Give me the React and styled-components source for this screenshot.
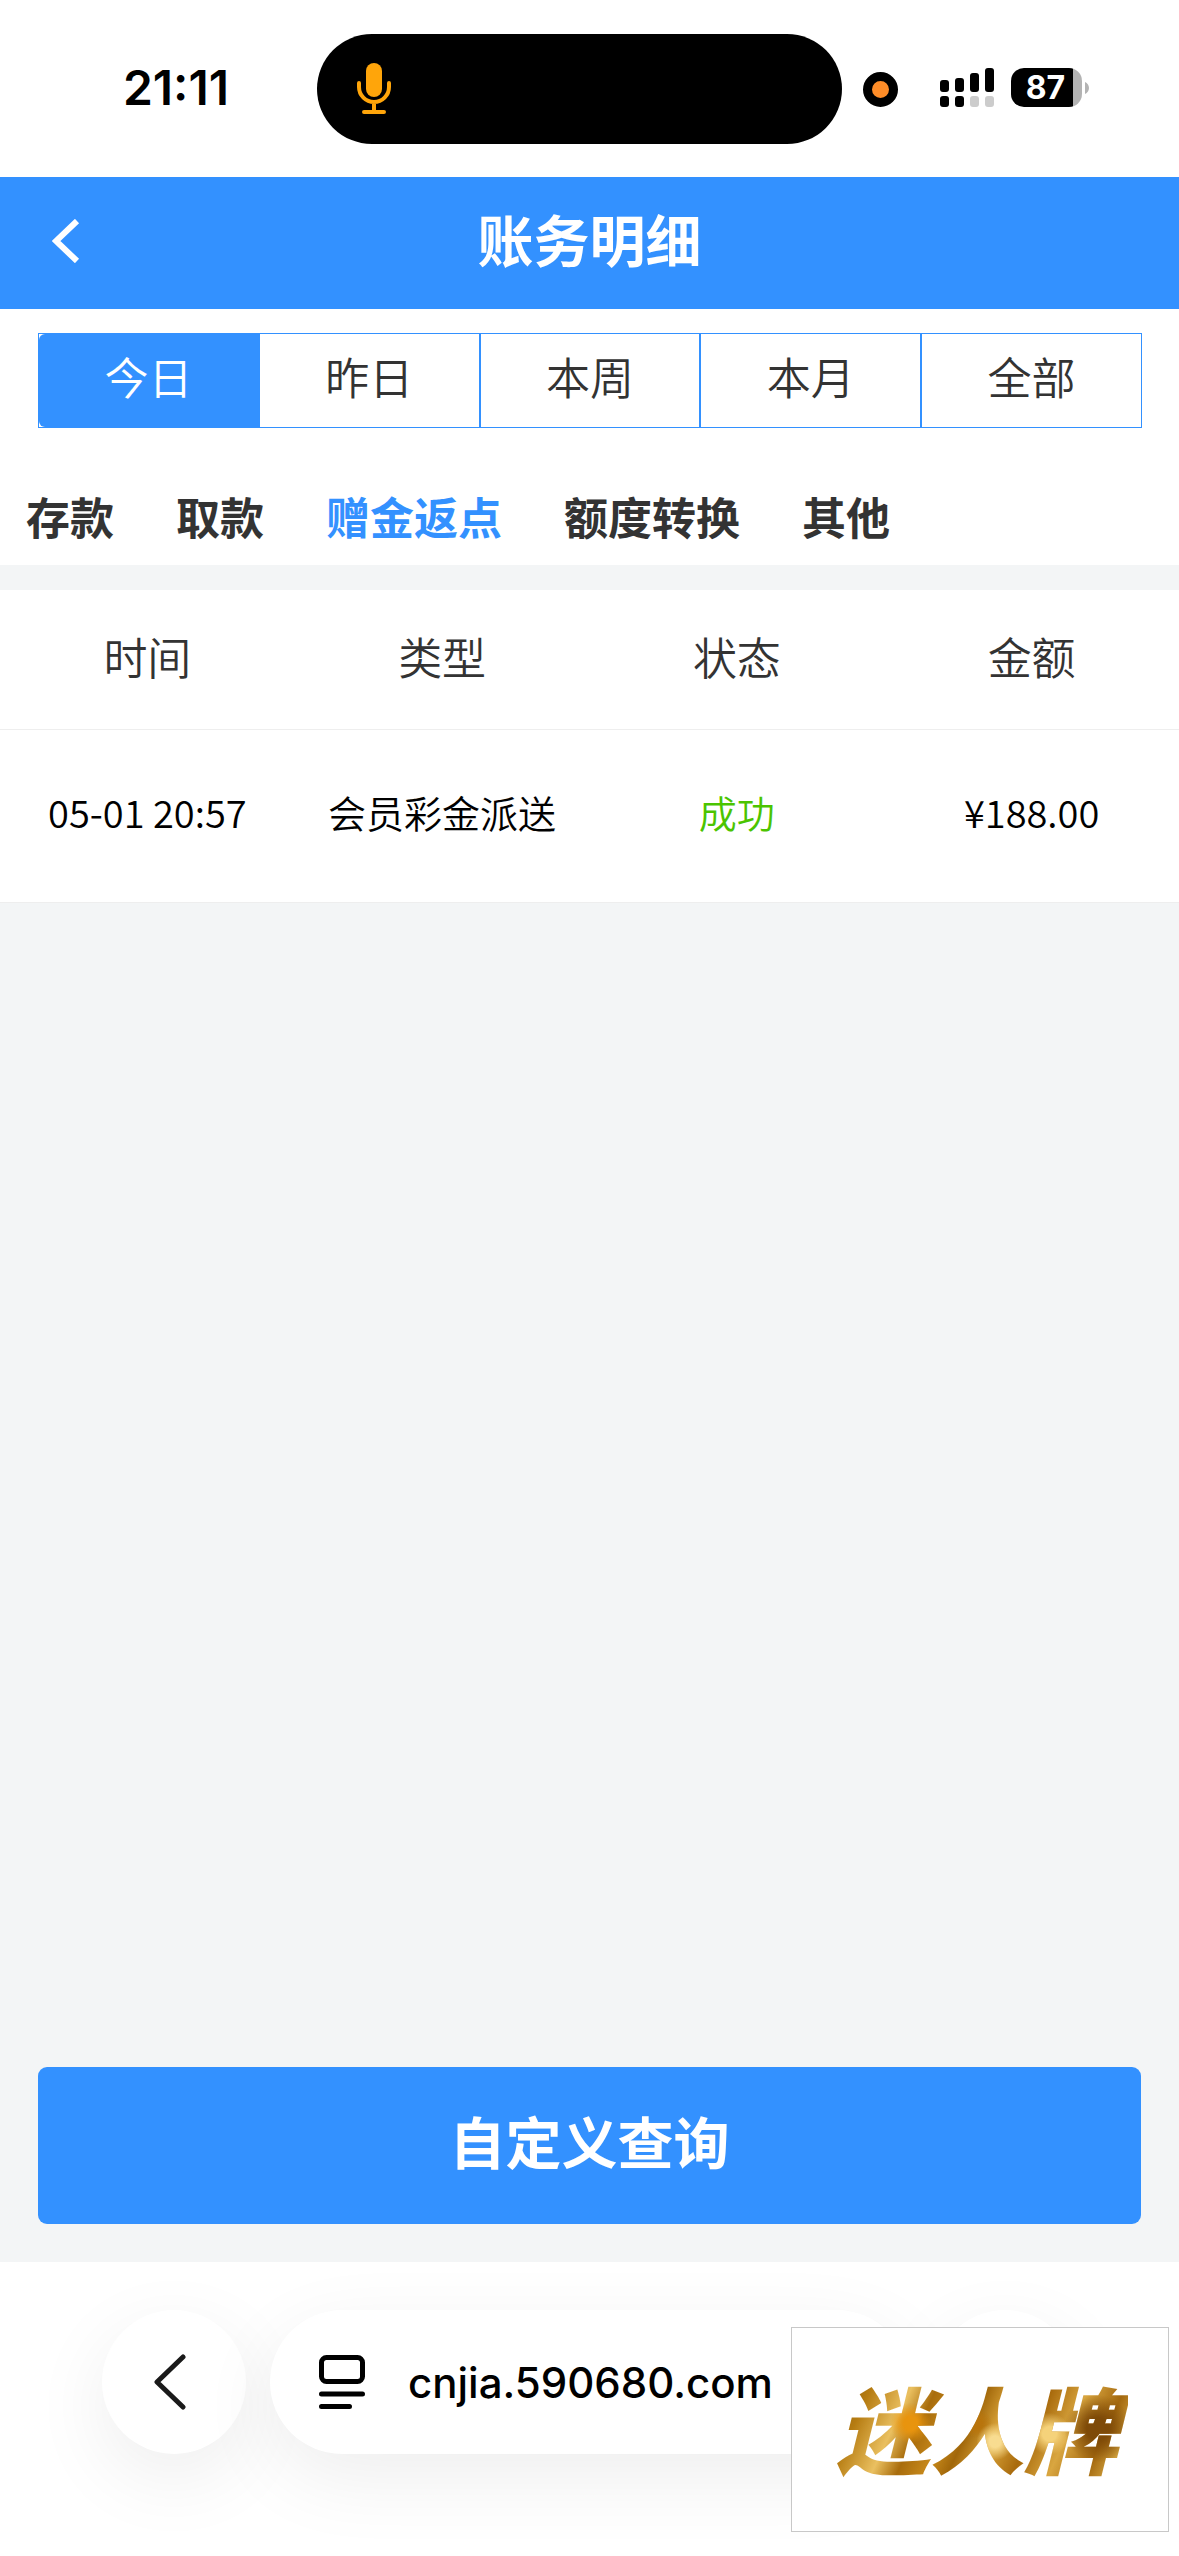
import React, { useState } from "react";
import styled, { createGlobalStyle } from "styled-components";

const BLUE = "#3391ff";
const CJK = `"Noto Sans CJK SC", "Noto Sans", sans-serif`;
const LATIN = `Inter, "Liberation Sans", sans-serif`;

const GlobalStyle = createGlobalStyle`
  *, *::before, *::after { box-sizing: border-box; }
  body { margin: 0; background: #fff; font-family: ${CJK}; color: #333; }
  button { margin: 0; padding: 0; border: 0; background: none; font: inherit; color: inherit; cursor: pointer; }
  svg { display: block; flex: none; }
`;

const Page = styled.div`
  display: flex;
  flex-direction: column;
  min-height: 100vh;
  background: #fff;
`;

const StatusBar = styled.div`
  display: grid;
  grid-template-columns: 317fr 525fr 337fr;
  align-items: center;
  padding: 34px 0 33px;
  font-family: ${LATIN};
  color: #000;
`;

const Clock = styled.time`
  justify-self: end;
  padding: 0 88px 2px 0;
  font-size: 48px;
  line-height: 56px;
  font-weight: 600;
`;

const Island = styled.div`
  display: flex;
  align-items: center;
  height: 110px;
  padding-left: 40px;
  border-radius: 55px;
  background: #000;
`;

const Indicators = styled.div`
  display: flex;
  align-items: center;
  padding-left: 21px;
`;

const RecordingDot = styled.span`
  width: 35px;
  height: 35px;
  margin-right: 42px;
  border: 9px solid #000;
  border-radius: 50%;
  background: #ff8d28;
`;

const Battery = styled.div`
  display: flex;
  align-items: center;
  gap: 3px;
  margin-left: 17px;
`;

const BatteryBody = styled.div`
  width: 71px;
  height: 39px;
  padding-right: 2px;
  border-radius: 13px;
  background: linear-gradient(to right, #000 62px, #b3b3b3 62px);
  color: #fff;
  font-size: 32px;
  line-height: 39px;
  font-weight: 700;
  text-align: center;
`;

const SignalGroup = styled.div`
  display: flex;
  align-items: center;
  padding-bottom: 3px;
`;

const Header = styled.header`
  display: grid;
  grid-template-columns: 1fr auto 1fr;
  align-items: center;
  height: 132px;
  padding: 0 52px 4px;
  background: ${BLUE};
  color: #fff;
`;

const Title = styled.h1`
  margin: 0;
  padding-bottom: 6px;
  font-size: 56px;
  line-height: 80px;
  font-weight: 700;
`;

const BackButton = styled.button`
  justify-self: start;
`;

const Segments = styled.div`
  display: flex;
  margin: 24px 37px 0 38px;
  border: 1px solid ${BLUE};
`;

const Segment = styled.button`
  flex: 1;
  height: 93px;
  padding-bottom: 10px;
  border-radius: ${(p) => (p.$active ? "6px 0 0 6px" : "0")};
  background: ${(p) => (p.$active ? BLUE : "#fff")};
  color: ${(p) => (p.$active ? "#fff" : "#333")};
  font-size: 44px;
  font-weight: 350;

  & + & {
    border-left: 2px solid ${BLUE};
  }
`;

const Tabs = styled.nav`
  display: flex;
  gap: 62px;
  padding: 56px 26px 16px;
`;

const Tab = styled.button`
  color: ${(p) => (p.$active ? BLUE : "#333")};
  font-size: 44px;
  line-height: 65px;
  font-weight: 700;
  white-space: nowrap;
`;

const Content = styled.main`
  flex: 1;
  display: flex;
  flex-direction: column;
  justify-content: space-between;
  padding-top: 25px;
  background: #f3f5f6;
`;

const Records = styled.table`
  width: 100%;
  table-layout: fixed;
  border-collapse: collapse;
  background: #fff;
  text-align: center;
`;

const HeadCell = styled.th`
  height: 139px;
  padding: 0 0 6px;
  border-bottom: 1px solid #eee;
  font-size: 44px;
  font-weight: 350;
`;

const Cell = styled.td`
  height: 173px;
  padding: 0 0 8px;
  border-bottom: 1px solid #eee;
  color: ${(p) => (p.$success ? "#4bc400" : "#000")};
  font-size: 38px;
  font-weight: 350;
  white-space: nowrap;
`;

const Actions = styled.div`
  padding: 38px;
`;

const QueryButton = styled.button`
  width: 100%;
  height: 157px;
  padding-bottom: 12px;
  border-radius: 9px;
  background: ${BLUE};
  color: #fff;
  font-size: 56px;
  font-weight: 700;
`;

const BrowserBar = styled.footer`
  position: relative;
  display: flex;
  gap: 24px;
  height: 294px;
  padding: 48px 102px 0;
  overflow: hidden;
  background: #fff;
  font-family: ${LATIN};
  color: #000;
`;

const RoundButton = styled.button`
  display: flex;
  flex: none;
  align-items: center;
  justify-content: center;
  width: 144px;
  height: 144px;
  padding-right: 8px;
  border-radius: 50%;
  background: #fff;
  box-shadow: 0 24px 80px rgba(0, 0, 0, 0.07);
`;

const AddressBar = styled.button`
  display: flex;
  flex: 1;
  align-items: center;
  gap: 42px;
  height: 144px;
  padding-left: 49px;
  border-radius: 72px;
  background: #fff;
  box-shadow: 0 24px 80px rgba(0, 0, 0, 0.07);
  font-size: 42px;
  font-weight: 500;
  white-space: nowrap;
`;

const BrandBadge = styled.div`
  position: absolute;
  right: 10px;
  bottom: 24px;
  display: flex;
  align-items: center;
  justify-content: center;
  width: 378px;
  height: 205px;
  padding: 0 6px 8px 0;
  border: 1px solid #c8c8c8;
  background: #fff;
`;

const BrandName = styled.span`
  padding: 0 10px;
  background:
    radial-gradient(circle at 28% 48%, #e8940e 0 3%, transparent 9%),
    radial-gradient(circle at 56% 62%, #f8dc90 0 3%, transparent 10%),
    radial-gradient(circle at 50% 48%, #b8740c 0 3%, transparent 9%),
    radial-gradient(circle at 90% 52%, #7e4a08 0 4%, transparent 12%),
    radial-gradient(circle at 74% 56%, #f5d27a 0 3%, transparent 9%),
    linear-gradient(115deg, #8a5a06 6%, #b67c12 16%, #eac060 27%, #a86c0c 34%, #c88a1c 42%, #a1670a 48%, #dba53a 56%, #a86a0c 66%, #d9a640 76%, #a3680e 86%, #d9ac48 94%);
  background-clip: text;
  -webkit-background-clip: text;
  color: transparent;
  font-family: ${CJK};
  font-size: 94px;
  line-height: 130px;
  font-weight: 900;
  font-style: italic;
`;

const MicIcon = () => (
  <svg width="34" height="52" viewBox="0 0 34 52" fill="none" stroke="#ffa50a" strokeWidth="4" strokeLinecap="round" aria-hidden="true">
    <rect x="9" y="0" width="16" height="34" rx="8" fill="#ffa50a" stroke="none" />
    <path d="M2 20v4a15 15 0 0 0 30 0v-4M17 40v8M7 49h20" />
  </svg>
);

const SignalIcon = () => (
  <svg width="54" height="39" viewBox="0 0 54 39" role="img" aria-label="信号">
    <rect x="0" y="12" width="9" height="12" rx="3" />
    <rect x="15" y="10" width="9" height="14" rx="3" />
    <rect x="30" y="5" width="9" height="19" rx="3" />
    <rect x="45" y="0" width="9" height="24" rx="3" />
    <rect x="0" y="28" width="9" height="11" rx="3" />
    <rect x="15" y="28" width="9" height="11" rx="3" />
    <rect x="30" y="28" width="9" height="11" rx="3" fill="#ccc" />
    <rect x="45" y="28" width="9" height="11" rx="3" fill="#ccc" />
  </svg>
);

const BatteryTip = () => (
  <svg width="4" height="12" viewBox="0 0 4 12" aria-hidden="true">
    <path d="M0 0c2.500 1 4 3.500 4 6s-1.500 5-4 6z" fill="#b3b3b3" />
  </svg>
);

const HeaderChevron = () => (
  <svg width="28" height="44" viewBox="0 0 28 44" fill="none" stroke="#fff" strokeWidth="6" aria-hidden="true">
    <path d="M25 2 4 22l21 20" />
  </svg>
);

const BrowserChevron = () => (
  <svg width="32" height="56" viewBox="0 0 32 56" fill="none" stroke="#1a1a1a" strokeWidth="5" strokeLinecap="round" strokeLinejoin="round" aria-hidden="true">
    <path d="M29 3 3 28l26 25" />
  </svg>
);

const ReaderIcon = () => (
  <svg width="47" height="54" viewBox="0 0 47 54" fill="none" stroke="#000" strokeWidth="5" strokeLinecap="round" aria-hidden="true">
    <rect x="2.500" y="2.500" width="41" height="24" rx="5" />
    <path d="M2.500 39h41M2.500 51.500h28" />
  </svg>
);

const periods = ["今日", "昨日", "本周", "本月", "全部"];
const categories = ["存款", "取款", "赠金返点", "额度转换", "其他"];
const columns = ["时间", "类型", "状态", "金额"];
const records = [{ time: "05-01 20:57", type: "会员彩金派送", status: "成功", amount: "¥188.00" }];

export default function App() {
  const [period, setPeriod] = useState("今日");
  const [category, setCategory] = useState("赠金返点");

  return (
    <Page>
      <GlobalStyle />
      <StatusBar>
        <Clock>21:11</Clock>
        <Island>
          <MicIcon />
        </Island>
        <Indicators>
          <RecordingDot />
          <SignalGroup>
            <SignalIcon />
            <Battery>
              <BatteryBody>87</BatteryBody>
              <BatteryTip />
            </Battery>
          </SignalGroup>
        </Indicators>
      </StatusBar>

      <Header>
        <BackButton aria-label="返回">
          <HeaderChevron />
        </BackButton>
        <Title>账务明细</Title>
      </Header>

      <Segments>
        {periods.map((name) => (
          <Segment key={name} $active={name === period} aria-pressed={name === period} onClick={() => setPeriod(name)}>
            {name}
          </Segment>
        ))}
      </Segments>

      <Tabs>
        {categories.map((name) => (
          <Tab key={name} $active={name === category} aria-pressed={name === category} onClick={() => setCategory(name)}>
            {name}
          </Tab>
        ))}
      </Tabs>

      <Content>
        <Records>
          <thead>
            <tr>
              {columns.map((name) => (
                <HeadCell key={name} scope="col">{name}</HeadCell>
              ))}
            </tr>
          </thead>
          <tbody>
            {records.map((r) => (
              <tr key={r.time}>
                <Cell>{r.time}</Cell>
                <Cell>{r.type}</Cell>
                <Cell $success>{r.status}</Cell>
                <Cell>{r.amount}</Cell>
              </tr>
            ))}
          </tbody>
        </Records>
        <Actions>
          <QueryButton>自定义查询</QueryButton>
        </Actions>
      </Content>

      <BrowserBar>
        <RoundButton aria-label="后退">
          <BrowserChevron />
        </RoundButton>
        <AddressBar>
          <ReaderIcon />
          cnjia.590680.com
        </AddressBar>
        <RoundButton aria-label="更多" />
        <BrandBadge>
          <BrandName>迷人牌</BrandName>
        </BrandBadge>
      </BrowserBar>
    </Page>
  );
}
